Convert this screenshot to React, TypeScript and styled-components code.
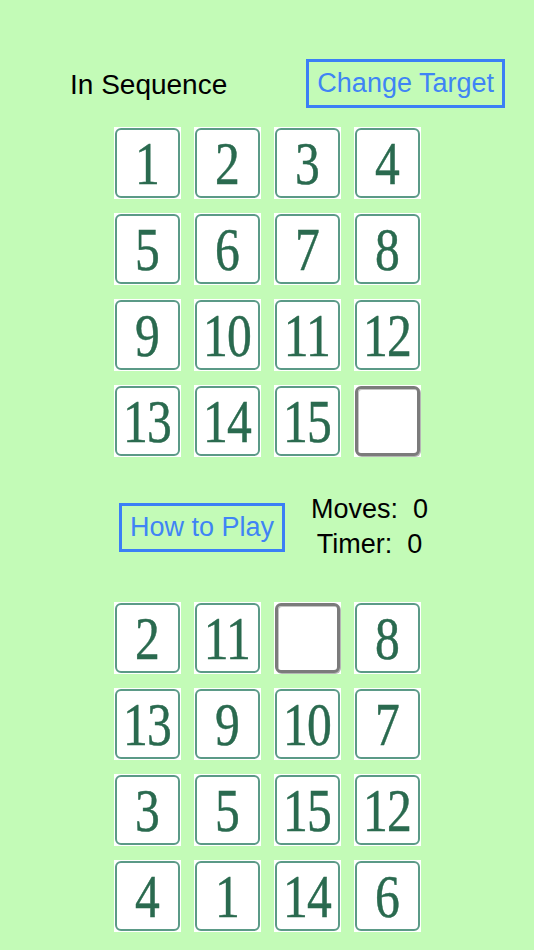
import React from "react";
import styled, { createGlobalStyle } from "styled-components";

const target: Array<number | null> = [1, 2, 3, 4, 5, 6, 7, 8, 9, 10, 11, 12, 13, 14, 15, null];
const board: Array<number | null> = [2, 11, null, 8, 13, 9, 10, 7, 3, 5, 15, 12, 4, 1, 14, 6];

const GlobalStyle = createGlobalStyle`
	body {
		margin: 0;
		background: #c3fbb7;
		font-family: "Liberation Sans", Arial, sans-serif;
	}
`;

const Tile: React.FC<{ value: number | null }> = ({ value }) => (
	<TileWrap>
		<TileFace $empty={value === null}>{value !== null && <Digit>{value}</Digit>}</TileFace>
	</TileWrap>
);

const Board: React.FC<{ tiles: Array<number | null>; top: number }> = ({ tiles, top }) => (
	<Grid $top={top}>
		{tiles.map((value, i) => (
			<Tile key={i} value={value} />
		))}
	</Grid>
);

export const App: React.FC = () => {
	return (
		<>
			<GlobalStyle />
			<Page>
				<Header>
					<Title>In Sequence</Title>
					<LinkButton>Change Target</LinkButton>
				</Header>
				<Board tiles={target} top={19} />
				<Controls>
					<LinkButton>How to Play</LinkButton>
					<Stats>
						<div>Moves:  0</div>
						<div>Timer:  0</div>
					</Stats>
				</Controls>
				<Board tiles={board} top={40} />
			</Page>
		</>
	);
};
export default App;

// style 영역
const Page = styled.div`
	width: 534px;
	min-height: 950px;
	padding-top: 59px;
	box-sizing: border-box;
	background: #c3fbb7;
`;

const Header = styled.div`
	display: flex;
	align-items: center;
	justify-content: space-between;
	height: 49px;
	padding: 0 29px 0 70px;
`;

const Title = styled.div`
	font-size: 28px;
	padding-top: 3px;
	color: #000;
`;

const LinkButton = styled.div`
	display: flex;
	align-items: center;
	height: 49px;
	box-sizing: border-box;
	padding: 0 8px;
	border: 3px solid #3b7ff6;
	color: #3f84f5;
	font-size: 27px;
	white-space: nowrap;
`;

const Grid = styled.div<{ $top: number }>`
	display: grid;
	grid-template-columns: repeat(4, 67px);
	grid-auto-rows: 72px;
	column-gap: 13px;
	row-gap: 14px;
	justify-content: center;
	margin-top: ${({ $top }) => $top}px;
`;

const TileWrap = styled.div`
	background: #fff;
	padding: 1px;
	box-sizing: border-box;
`;

const TileFace = styled.div<{ $empty: boolean }>`
	height: 100%;
	box-sizing: border-box;
	display: flex;
	align-items: center;
	justify-content: center;
	border-radius: 6px;
	background: #fff;
	border: ${({ $empty }) => ($empty ? "3px solid #7b7b7b" : "2px solid #5b9a87")};
	box-shadow: ${({ $empty }) => ($empty ? "inset 1px 1px 0 #c4c4c4, 1px 1px 0 #b5b5b5" : "none")};
`;

const Digit = styled.span`
	font-family: "Liberation Serif", "Times New Roman", serif;
	font-size: 62px;
	line-height: 1;
	color: #2a6a4f;
	transform: scaleX(0.8);
	letter-spacing: -1px;
	-webkit-text-stroke: 0.5px #2a6a4f;
`;

const Controls = styled.div`
	display: flex;
	align-items: center;
	gap: 26px;
	height: 70px;
	margin-top: 35px;
	padding-left: 119px;
`;

const Stats = styled.div`
	display: flex;
	flex-direction: column;
	align-items: center;
	font-size: 27px;
	line-height: 35px;
	white-space: pre;
	color: #000;
`;
